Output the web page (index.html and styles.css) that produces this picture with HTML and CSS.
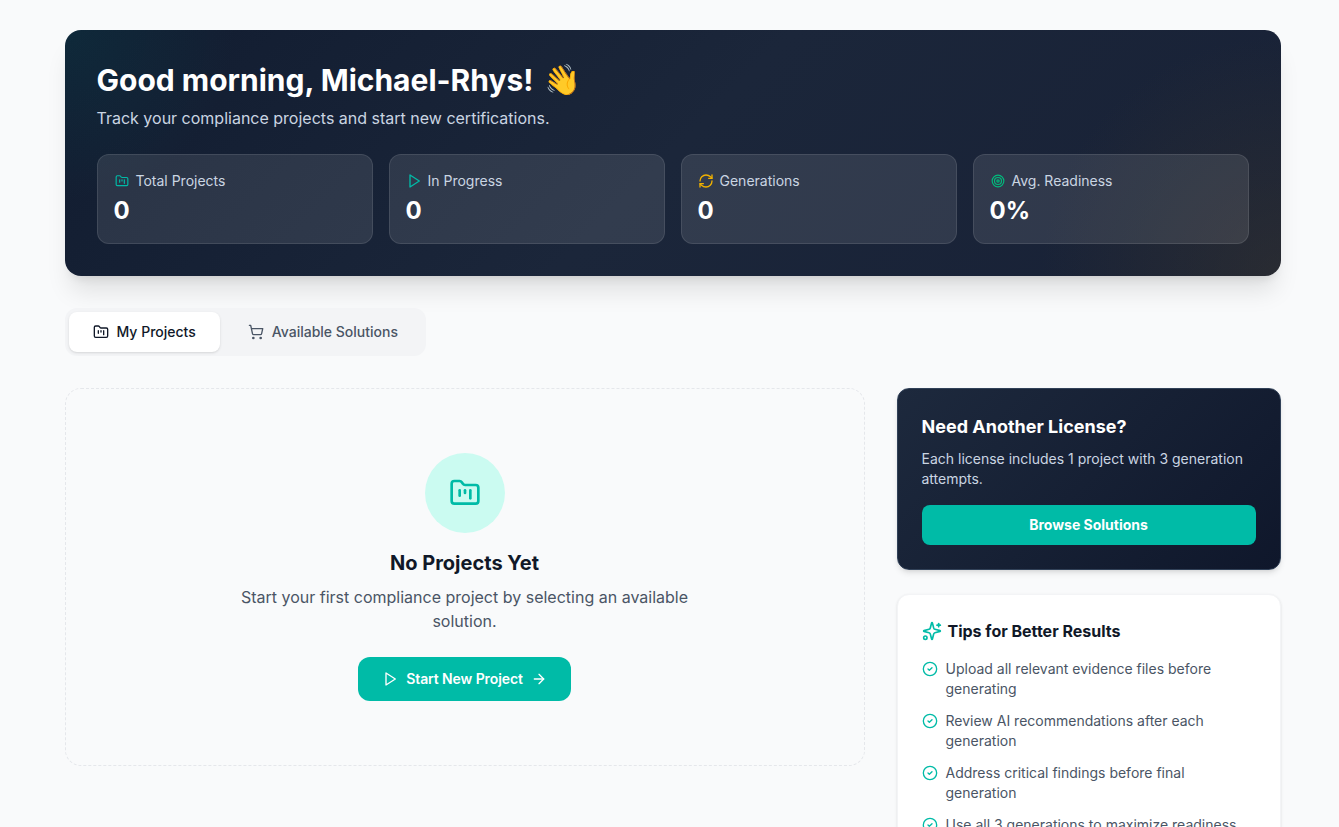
FILE: index.html
```html
<!DOCTYPE html>
<html lang="en">
<head>
    <meta charset="UTF-8">
    <meta name="viewport" content="width=device-width, initial-scale=1.0">
    <title>Dashboard</title>
    <link rel="stylesheet" href="styles.css">
</head>
<body>
    <svg class="icon-defs" aria-hidden="true">
        <symbol id="i-folder" viewBox="0 0 24 24"><path d="M4 20h16a2 2 0 0 0 2-2V8a2 2 0 0 0-2-2h-7.93a2 2 0 0 1-1.66-.9l-.82-1.2A2 2 0 0 0 7.93 3H4a2 2 0 0 0-2 2v13c0 1.1.9 2 2 2Z"/><path d="M8 10v4"/><path d="M12 10v2"/><path d="M16 10v6"/></symbol>
        <symbol id="i-play" viewBox="0 0 24 24"><polygon points="6 3 20 12 6 21 6 3"/></symbol>
        <symbol id="i-refresh" viewBox="0 0 24 24"><path d="M3 12a9 9 0 0 1 9-9 9.75 9.75 0 0 1 6.74 2.74L21 8"/><path d="M21 3v5h-5"/><path d="M21 12a9 9 0 0 1-9 9 9.75 9.75 0 0 1-6.74-2.74L3 16"/><path d="M8 16H3v5"/></symbol>
        <symbol id="i-target" viewBox="0 0 24 24"><circle cx="12" cy="12" r="10"/><circle cx="12" cy="12" r="6"/><circle cx="12" cy="12" r="2"/></symbol>
        <symbol id="i-cart" viewBox="0 0 24 24"><circle cx="8" cy="21" r="1"/><circle cx="19" cy="21" r="1"/><path d="M2.05 2.05h2l2.66 12.42a2 2 0 0 0 2 1.58h9.78a2 2 0 0 0 1.95-1.57l1.65-7.43H5.12"/></symbol>
        <symbol id="i-arrow" viewBox="0 0 24 24"><path d="M5 12h14"/><path d="m12 5 7 7-7 7"/></symbol>
        <symbol id="i-sparkles" viewBox="0 0 24 24"><path d="M9.937 15.5A2 2 0 0 0 8.5 14.063l-6.135-1.582a.5.5 0 0 1 0-.962L8.5 9.936A2 2 0 0 0 9.937 8.5l1.582-6.135a.5.5 0 0 1 .963 0L14.063 8.5A2 2 0 0 0 15.5 9.937l6.135 1.581a.5.5 0 0 1 0 .964L15.5 14.063a2 2 0 0 0-1.437 1.437l-1.582 6.135a.5.5 0 0 1-.963 0z"/><path d="M20 3v4"/><path d="M22 5h-4"/><circle cx="4" cy="20" r="2"/></symbol>
        <symbol id="i-check" viewBox="0 0 24 24"><circle cx="12" cy="12" r="10"/><path d="m9 12 2 2 4-4"/></symbol>
    </svg>

    <main class="page">
        <section class="hero">
            <h1>Good morning, Michael-Rhys! <span class="wave">👋</span></h1>
            <p class="hero-sub">Track your compliance projects and start new certifications.</p>
            <div class="stats">
                <div class="stat">
                    <div class="stat-label"><svg class="icon icon-sm teal"><use href="#i-folder"/></svg>Total Projects</div>
                    <div class="stat-value">0</div>
                </div>
                <div class="stat">
                    <div class="stat-label"><svg class="icon teal"><use href="#i-play"/></svg>In Progress</div>
                    <div class="stat-value">0</div>
                </div>
                <div class="stat">
                    <div class="stat-label"><svg class="icon amber"><use href="#i-refresh"/></svg>Generations</div>
                    <div class="stat-value">0</div>
                </div>
                <div class="stat">
                    <div class="stat-label"><svg class="icon icon-sm emerald"><use href="#i-target"/></svg>Avg. Readiness</div>
                    <div class="stat-value">0%</div>
                </div>
            </div>
        </section>

        <nav class="tabs">
            <button class="tab active"><svg class="icon"><use href="#i-folder"/></svg>My Projects</button>
            <button class="tab"><svg class="icon"><use href="#i-cart"/></svg>Available Solutions</button>
        </nav>

        <div class="columns">
            <section class="empty">
                <div class="empty-circle"><svg class="icon icon-lg"><use href="#i-folder"/></svg></div>
                <h2>No Projects Yet</h2>
                <p>Start your first compliance project by selecting an available solution.</p>
                <button class="start-btn">
                    <svg class="icon"><use href="#i-play"/></svg>
                    Start New Project
                    <svg class="icon"><use href="#i-arrow"/></svg>
                </button>
            </section>

            <aside class="side">
                <div class="license">
                    <h3>Need Another License?</h3>
                    <p>Each license includes 1 project with 3 generation attempts.</p>
                    <button class="browse-btn">Browse Solutions</button>
                </div>
                <div class="tips">
                    <h3><svg class="icon icon-tip teal"><use href="#i-sparkles"/></svg>Tips for Better Results</h3>
                    <ul>
                        <li><svg class="icon teal"><use href="#i-check"/></svg>Upload all relevant evidence files before generating</li>
                        <li><svg class="icon teal"><use href="#i-check"/></svg>Review AI recommendations after each generation</li>
                        <li><svg class="icon teal"><use href="#i-check"/></svg>Address critical findings before final generation</li>
                        <li><svg class="icon teal"><use href="#i-check"/></svg>Use all 3 generations to maximize readiness</li>
                    </ul>
                </div>
            </aside>
        </div>
    </main>
</body>
</html>
```

FILE: styles.css
```css
* {
    box-sizing: border-box;
}
html, body {
    height: 100%;
    overflow: hidden;
}
body {
    margin: 0;
    background: #f9fafb;
    color: #101828;
    font-family: Inter, "Liberation Sans", sans-serif;
}
h1, h2, h3, p, ul {
    margin: 0;
    padding: 0;
}
button {
    font-family: inherit;
    border: none;
    cursor: pointer;
}
.icon-defs {
    display: none;
}
.icon {
    width: 16px;
    height: 16px;
    flex-shrink: 0;
    fill: none;
    stroke: currentColor;
    stroke-width: 2;
    stroke-linecap: round;
    stroke-linejoin: round;
}
.icon-sm {
    width: 14px;
    height: 14px;
    margin: 0 1px;
}
.icon-lg {
    width: 32px;
    height: 32px;
}
.icon-tip {
    width: 20px;
    height: 20px;
}
.teal { color: #00bba7; }
.amber { color: #f0b100; }
.emerald { color: #00bc7d; }

.page {
    width: 1216px;
    margin-left: 64.5px;
    padding-top: 30px;
}

/* Greeting banner */
.hero {
    padding: 32px;
    border-radius: 16px;
    color: white;
    background:
        radial-gradient(circle at 100% 100%, rgba(65, 58, 45, 0.42), transparent 240px),
        radial-gradient(circle at 0 0, rgba(0, 110, 110, 0.16), transparent 170px),
        linear-gradient(135deg, #111c30 0%, #1b263a 50%, #182136 100%);
    box-shadow: 0 20px 25px -5px rgba(0, 0, 0, 0.1), 0 8px 10px -6px rgba(0, 0, 0, 0.1);
}
.hero h1 {
    font-size: 30px;
    line-height: 36px;
    font-weight: 700;
}
.wave {
    display: inline-block;
    margin-left: 3px;
    line-height: 1;
    font-family: "Noto Color Emoji", sans-serif;
    transform: rotate(-8deg);
}
.hero-sub {
    margin-top: 8px;
    font-size: 16px;
    line-height: 24px;
    color: #cad5e2;
}
.stats {
    display: grid;
    grid-template-columns: repeat(4, 1fr);
    gap: 16px;
    margin-top: 24px;
}
.stat {
    height: 90px;
    padding: 16px;
    border-radius: 12px;
    background: rgba(255, 255, 255, 0.1);
    border: 1px solid rgba(255, 255, 255, 0.1);
}
.stat-label {
    display: flex;
    align-items: center;
    gap: 6px;
    font-size: 14px;
    line-height: 20px;
    color: #cad5e2;
}
.stat-value {
    margin-top: 4px;
    font-size: 24px;
    line-height: 32px;
    font-weight: 700;
}

/* Tabs */
.tabs {
    display: inline-flex;
    gap: 4px;
    margin-top: 32px;
    padding: 4px;
    background: #f3f4f6;
    border-radius: 12px;
}
.tab {
    display: flex;
    align-items: center;
    gap: 8px;
    height: 40px;
    padding: 0 24px;
    border-radius: 8px;
    background: transparent;
    color: #4a5565;
    font-size: 14px;
    line-height: 20px;
    font-weight: 500;
}
.tab.active {
    background: white;
    color: #101828;
    box-shadow: 0 1px 3px rgba(0, 0, 0, 0.1), 0 1px 2px -1px rgba(0, 0, 0, 0.1);
}

.columns {
    display: grid;
    grid-template-columns: 800px 384px;
    gap: 32px;
    margin-top: 32px;
    align-items: start;
}

/* Empty state */
.empty {
    height: 378px;
    padding-top: 64px;
    display: flex;
    flex-direction: column;
    align-items: center;
    text-align: center;
    border: 1px dashed #e5e7eb;
    border-radius: 16px;
}
.empty-circle {
    width: 80px;
    height: 80px;
    display: flex;
    align-items: center;
    justify-content: center;
    border-radius: 50%;
    background: #cbfbf1;
    color: #00bba7;
}
.empty h2 {
    margin-top: 16px;
    font-size: 20px;
    line-height: 28px;
    font-weight: 700;
}
.empty p {
    width: 448px;
    margin-top: 8px;
    font-size: 16px;
    line-height: 24px;
    color: #4a5565;
}
.start-btn {
    display: flex;
    align-items: center;
    gap: 8px;
    height: 44px;
    margin-top: 24px;
    padding: 0 24px;
    border-radius: 12px;
    background: #00bba7;
    color: white;
    font-size: 14px;
    line-height: 20px;
    font-weight: 600;
    letter-spacing: -0.1px;
}

/* Sidebar cards */
.side {
    display: flex;
    flex-direction: column;
    gap: 24px;
}
.license {
    padding: 24px;
    border-radius: 12px;
    color: white;
    background: linear-gradient(135deg, #1d293d, #0f172b);
    border: 1px solid #314158;
    box-shadow: 0 4px 6px -1px rgba(0, 0, 0, 0.1), 0 2px 4px -2px rgba(0, 0, 0, 0.1);
}
.license h3 {
    font-size: 18px;
    line-height: 28px;
    font-weight: 700;
}
.license p {
    margin-top: 8px;
    font-size: 14px;
    line-height: 20px;
    color: #cad5e2;
}
.browse-btn {
    width: 100%;
    height: 40px;
    margin-top: 16px;
    border-radius: 8px;
    background: #00bba7;
    color: white;
    font-size: 14px;
    line-height: 20px;
    font-weight: 700;
}
.tips {
    padding: 24px;
    background: white;
    border: 1px solid #f3f4f6;
    border-radius: 12px;
    box-shadow: 0 1px 3px rgba(0, 0, 0, 0.1), 0 1px 2px -1px rgba(0, 0, 0, 0.1);
}
.tips h3 {
    display: flex;
    align-items: center;
    gap: 6px;
    font-size: 16px;
    line-height: 24px;
    font-weight: 700;
}
.tips ul {
    list-style: none;
    display: flex;
    flex-direction: column;
    gap: 12px;
    margin-top: 16px;
}
.tips li {
    display: flex;
    gap: 8px;
    font-size: 14px;
    line-height: 20px;
    color: #4a5565;
}
.tips li .icon {
    margin-top: 2px;
}
```
